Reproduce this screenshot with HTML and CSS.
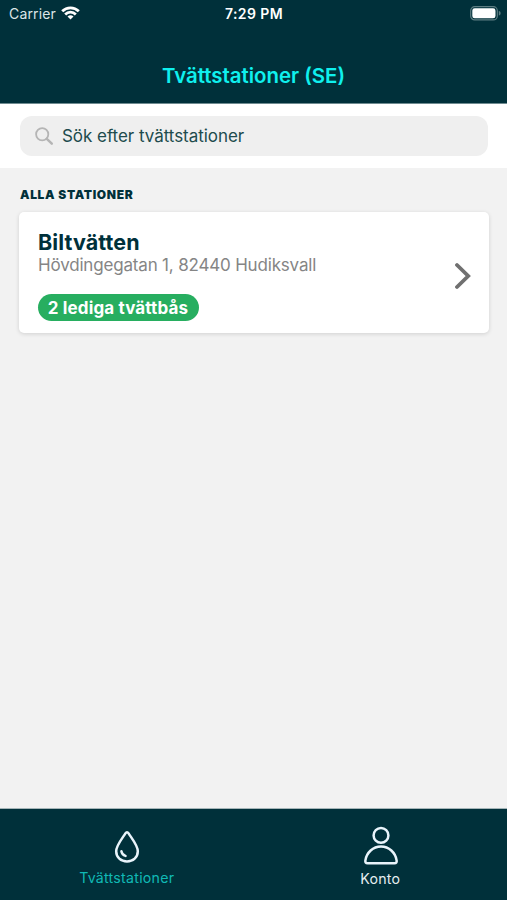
FILE: index.html
```html
<!DOCTYPE html>
<html lang="sv">
<head>
<meta charset="utf-8">
<title>Tvättstationer</title>
<link rel="stylesheet" href="styles.css">
</head>
<body>
<div class="app">
  <header class="header">
    <div class="status">
      <div class="carrier"><span>Carrier</span>
        <svg class="wifi" width="19" height="14" viewBox="0 0 19 14"><g fill="none" stroke="#fff" stroke-width="2.8"><path d="M1.2 5.2a11.8 11.8 0 0 1 16.6 0"/><path d="M4.2 8.4a7.5 7.5 0 0 1 10.6 0"/></g><path d="M6.5 10.6a4.3 4.3 0 0 1 6 0l-3 3z" fill="#fff"/></svg>
      </div>
      <span class="time">7:29 PM</span>
      <svg class="battery" width="31" height="15" viewBox="0 0 31 15"><rect x=".7" y=".7" width="26.6" height="13.2" rx="4" fill="none" stroke="#5d7d82" stroke-width="1.2"/><rect x="2.3" y="2.3" width="23.2" height="10" rx="2.4" fill="#fff"/><path d="M28.8 5v4.6c1.3-.3 1.8-1.2 1.8-2.3s-.5-2-1.8-2.3z" fill="#5d7d82"/></svg>
    </div>
    <h1 class="title">Tvättstationer (SE)</h1>
  </header>
  <div class="searchbar">
    <div class="search">
      <svg width="19" height="19" viewBox="0 0 19 19" fill="none" stroke="#b5b5b5"><circle cx="7.2" cy="7.2" r="6.1" stroke-width="1.8"/><path d="M11.8 11.8l5 4.8" stroke-width="2.5" stroke-linecap="round"/></svg>
      <span class="placeholder">Sök efter tvättstationer</span>
    </div>
  </div>
  <main class="content">
    <h2 class="section">ALLA STATIONER</h2>
    <article class="card">
      <div class="info">
        <h3 class="name">Biltvätten</h3>
        <p class="address">Hövdingegatan 1, 82440 Hudiksvall</p>
        <span class="pill">2 lediga tvättbås</span>
      </div>
      <svg class="chevron" width="16" height="28" viewBox="0 0 16 28" fill="none" stroke="#707070" stroke-width="3.8" stroke-linecap="round" stroke-linejoin="miter"><path d="M2 3l11.200 11L2 25"/></svg>
    </article>
  </main>
  <nav class="tabs">
    <div class="tab active">
      <svg width="26" height="34" viewBox="0 0 26 34" fill="none" stroke="#e9f4fb" stroke-width="2.5" stroke-linecap="round" stroke-linejoin="round"><path d="M13 2.300c-.7 0-1.200.5-1.600 1.100C8.300 8.300 2.200 15.500 2.200 21.200c0 6.100 4.700 10.200 10.800 10.200s10.800-4.100 10.800-10.200c0-5.700-6.100-12.900-9.200-17.800-.4-.6-.9-1.100-1.600-1.100z"/><path d="M7.400 21.200c.3 2.400 1.900 4.200 4.100 4.700"/></svg>
      <span class="tab-label stations">Tvättstationer</span>
    </div>
    <div class="tab">
      <svg width="36" height="40" viewBox="0 0 36 40" fill="none" stroke="#e9f4fb" stroke-width="2.500" stroke-linejoin="round"><circle cx="19" cy="9.400" r="7.400"/><path d="M5.500 37.300h27c1.700 0 2.400-1.200 2.100-2.900C33.400 26.600 27 20.500 19 20.500S4.600 26.600 3.400 34.400C3.100 36.100 3.800 37.300 5.500 37.300z"/></svg>
      <span class="tab-label konto">Konto</span>
    </div>
  </nav>
</div>
</body>
</html>
```
FILE: styles.css
```css
* { box-sizing: border-box; }
body { margin: 0; font-family: Inter, "Liberation Sans", sans-serif; }
h1, h2, h3, p { margin: 0; }
svg { display: block; flex: none; }
.app { width: 507px; height: 900px; display: flex; flex-direction: column; background: #f2f2f2; }
.header { height: 104px; background: #00303a; border-bottom: 1px solid #6f8b90; flex: none; }
.status { height: 28px; display: grid; grid-template-columns: 1fr auto 1fr; align-items: center; padding: 0 6px 0 9px; color: #fff; font-size: 14px; line-height: 20px; }
.carrier { display: flex; align-items: center; gap: 5px; color: #dce5e7; letter-spacing: .15px; }
.wifi { margin-top: -2px; }
.time { font-weight: 600; letter-spacing: .4px; margin-left: -2px; }
.battery { justify-self: end; margin-top: -1px; }
.title { margin-top: 34px; text-align: center; color: #0ff0ee; font-size: 20.4px; line-height: 28px; font-weight: 600; white-space: nowrap; }
.searchbar { height: 64px; flex: none; padding: 12px 19px 12px 20px; background: #fff; }
.search { height: 40px; display: flex; align-items: center; gap: 8px; padding-left: 15px; border-radius: 12px; background: #efefef; }
.placeholder { font-size: 17px; line-height: 24px; letter-spacing: -.04px; color: #204b4d; white-space: nowrap; }
.content { flex: 1; padding: 18px 18px 0 19px; }
.section { margin-left: 1px; font-size: 12px; line-height: 18px; font-weight: 900; color: #00303a; letter-spacing: .65px; white-space: nowrap; }
.card { height: 121px; margin-top: 8px; padding: 0 18px 0 19px; display: flex; justify-content: space-between; background: #fff; border-radius: 5px; box-shadow: 0 1px 4px rgba(0,0,0,.14); }
.name { margin-top: 16px; font-size: 21.5px; line-height: 28px; font-weight: 700; letter-spacing: .1px; color: #00303a; white-space: nowrap; }
.address { font-size: 17px; line-height: 18px; letter-spacing: -.18px; color: #858585; white-space: nowrap; }
.pill { display: flex; align-items: center; justify-content: center; width: 161px; height: 27px; margin-top: 20px; border-radius: 14px; background: #27ae60; color: #fff; font-size: 17px; font-weight: 700; letter-spacing: .14px; padding-right: 1px; white-space: nowrap; }
.chevron { align-self: center; margin-top: 6px; }
.tabs { height: 92px; flex: none; display: grid; grid-template-columns: 1fr 1fr; background: #00303a; border-top: 1px solid #a5b5b8; }
.tab { display: flex; flex-direction: column; align-items: center; color: #e4ecef; padding-top: 17px; }
.active { color: #10b9b5; padding-top: 21px; }
.tab-label { font-size: 14.2px; line-height: 20px; margin-top: 3px; letter-spacing: .25px; }
.stations { margin-top: 4px; }
```
